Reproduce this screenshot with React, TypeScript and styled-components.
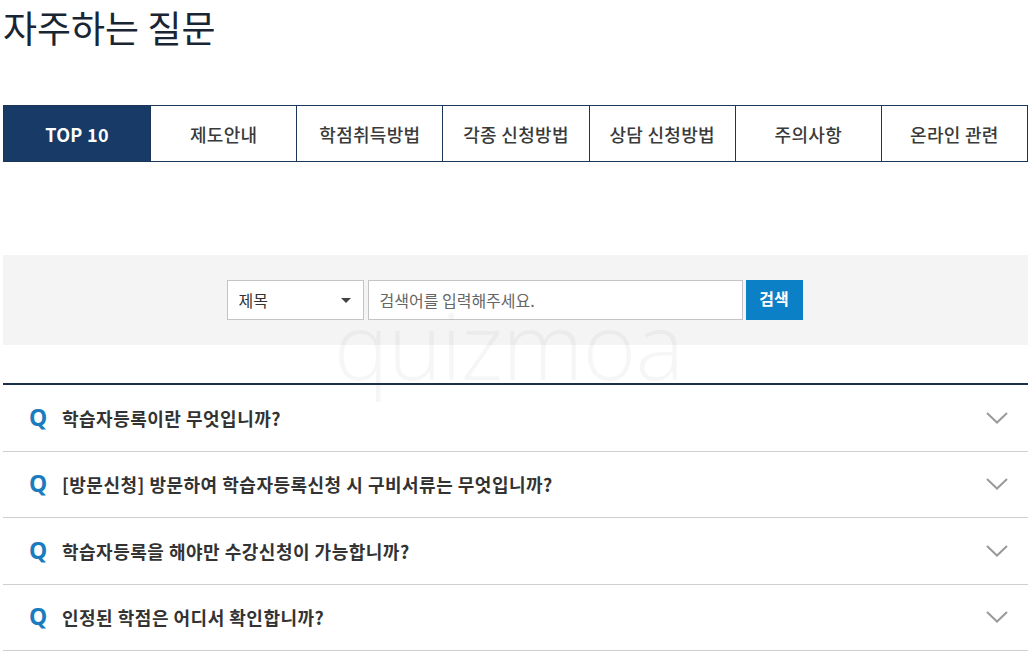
import * as React from "react";
import styled, { createGlobalStyle } from "styled-components";

const GlobalStyle = createGlobalStyle`
    body {
        margin: 0;
        background: #fff;
        font-family: "Noto Sans CJK KR", "Noto Sans", sans-serif;
        color: #333;
    }
`;

export const Page = styled.div`
    position: relative;
    width: 1025px;
    padding: 0 3px;
    overflow: hidden;
`;

export const Title = styled.h1`
    margin: 0;
    padding-top: 4px;
    height: 101px;
    font-size: 37px;
    font-weight: 400;
    letter-spacing: 0;
    line-height: 46px;
    color: #1a2533;
`;

export const Tabs = styled.ul`
    list-style: none;
    margin: 0;
    padding: 0;
    display: grid;
    grid-template-columns: repeat(7, 1fr);
    border: 1px solid #1c3657;
`;

export const Tab = styled.li<{ $active?: boolean }>`
    height: 55px;
    display: flex;
    align-items: center;
    justify-content: center;
    font-size: 18px;
    letter-spacing: 0.3px;
    font-weight: ${(p) => (p.$active ? 700 : 500)};
    color: ${(p) => (p.$active ? "#fff" : "#3a3a3a")};
    background: ${(p) => (p.$active ? "#173a66" : "#fff")};
    border-left: 1px solid #1c3657;
    &:first-child {
        border-left: none;
    }
`;

export const SearchBand = styled.form`
    margin-top: 93px;
    height: 90px;
    background: #f4f4f4;
    display: flex;
    align-items: center;
    justify-content: center;
    gap: 4px;
    padding-right: 2px;
`;

export const Select = styled.div`
    width: 137px;
    height: 40px;
    box-sizing: border-box;
    border: 1px solid #c4c4c4;
    background: #fff;
    display: flex;
    align-items: center;
    justify-content: space-between;
    padding: 0 12px 0 11px;
    font-size: 16px;
    color: #333;
`;

export const Caret = styled.span`
    width: 0;
    height: 0;
    border-left: 5px solid transparent;
    border-right: 5px solid transparent;
    border-top: 5px solid #444;
`;

export const Input = styled.input`
    width: 375px;
    height: 40px;
    box-sizing: border-box;
    border: 1px solid #c4c4c4;
    padding: 0 11px;
    font-family: "Noto Sans CJK KR", sans-serif;
    font-size: 16px;
    color: #333;
    outline: none;
    &::placeholder {
        color: #666;
    }
`;

export const SearchButton = styled.button`
    width: 57px;
    height: 40px;
    margin-left: -1px;
    border: none;
    background: #0b80c6;
    color: #fff;
    font-family: "Noto Sans CJK KR", sans-serif;
    font-size: 16px;
    font-weight: 700;
    padding: 0 0 4px;
`;

export const Watermark = styled.div`
    position: absolute;
    left: 334px;
    top: 282px;
    font-family: "Open Sans", "Noto Sans", sans-serif;
    font-weight: 300;
    font-size: 92px;
    letter-spacing: -1px;
    color: rgba(0, 0, 0, 0.035);
    pointer-events: none;
`;

export const FaqList = styled.ul`
    list-style: none;
    margin: 38px 0 0;
    padding: 0;
    border-top: 2px solid #1c3049;
`;

export const FaqRow = styled.li`
    height: 65.5px;
    border-bottom: 1px solid #cfcfcf;
    display: flex;
    align-items: center;
    padding: 0 20px 0 26px;
`;

export const QMark = styled.span`
    width: 33px;
    font-family: "Noto Sans", sans-serif;
    font-size: 23px;
    font-weight: 700;
    color: #1a7cbf;
    margin-top: -2px;
`;

export const Question = styled.span`
    flex: 1;
    font-size: 18px;
    font-weight: 700;
    color: #333;
    letter-spacing: 0.5px;
`;

const tabs = ["TOP 10", "제도안내", "학점취득방법", "각종 신청방법", "상담 신청방법", "주의사항", "온라인 관련"];

const questions = [
    "학습자등록이란 무엇입니까?",
    "[방문신청] 방문하여 학습자등록신청 시 구비서류는 무엇입니까?",
    "학습자등록을 해야만 수강신청이 가능합니까?",
    "인정된 학점은 어디서 확인합니까?",
];

const Chevron = () => (
    <svg width="22" height="12" viewBox="0 0 22 12" fill="none">
        <path d="M1 1 L11 10.5 L21 1" stroke="#9a9a9a" strokeWidth="2" />
    </svg>
);

export default function App() {
    return <Page>
        <GlobalStyle />
        <Title>자주하는 질문</Title>
        <Tabs>
            {tabs.map((t, i) => <Tab key={t} $active={i === 0}>{t}</Tab>)}
        </Tabs>
        <SearchBand onSubmit={(e) => e.preventDefault()}>
            <Select>제목<Caret /></Select>
            <Input placeholder="검색어를 입력해주세요." />
            <SearchButton type="submit">검색</SearchButton>
        </SearchBand>
        <FaqList>
            {questions.map((q) => <FaqRow key={q}>
                <QMark>Q</QMark>
                <Question>{q}</Question>
                <Chevron />
            </FaqRow>)}
        </FaqList>
        <Watermark>quizmoa</Watermark>
    </Page>;
}
